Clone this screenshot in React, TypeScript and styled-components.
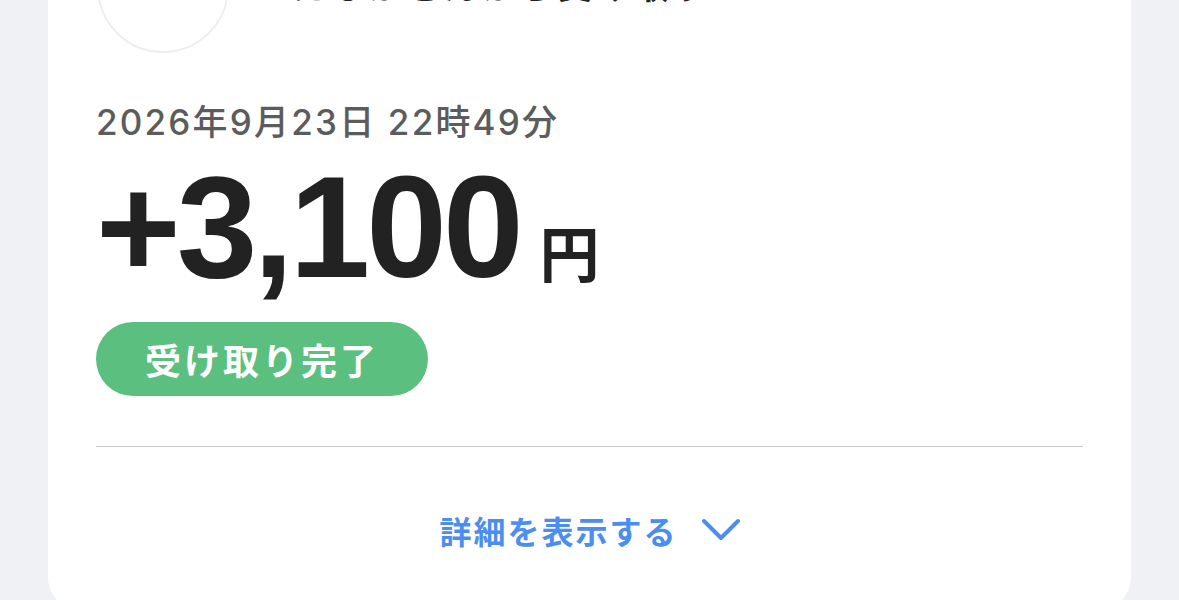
import React from "react";
import styled, { createGlobalStyle } from "styled-components";

const GlobalStyle = createGlobalStyle`
  html, body {
    margin: 0;
    padding: 0;
    background: #eff1f5;
    overflow: hidden;
  }
`;

const JP = `"Liberation Sans", "Noto Sans CJK JP", sans-serif`;

const Page = styled.div`
  height: 600px;
  overflow: hidden;
  padding: 0 48px;
  font-family: ${JP};
`;

const Card = styled.div`
  margin-top: -120px;
  background: #ffffff;
  border-radius: 34px;
  padding: 41px 48px 58px;
  display: flex;
  flex-direction: column;
`;

const Header = styled.div`
  display: flex;
  align-items: flex-start;
  gap: 62px;
`;

const Avatar = styled.div`
  width: 128px;
  height: 128px;
  margin-left: 1px;
  border-radius: 50%;
  border: 2px solid #eeeeee;
  flex-shrink: 0;
`;

const Title = styled.div`
  margin-top: 36px;
  font-size: 36px;
  font-weight: 700;
  color: #222222;
  letter-spacing: 2px;
`;

const DateText = styled.div`
  margin-top: 48px;
  font-family: "Inter", "Noto Sans CJK JP", sans-serif;
  font-size: 35px;
  font-weight: 500;
  color: #5c5c5c;
  letter-spacing: 2.2px;
  line-height: 1.2;
`;

const AmountRow = styled.div`
  display: flex;
  align-items: baseline;
  gap: 20px;
  margin-top: 12px;
  color: #222222;
`;

const Amount = styled.span`
  font-size: 145px;
  font-weight: 700;
  letter-spacing: -4px;
  line-height: 1;
`;

const Yen = styled.span`
  font-size: 60px;
  font-weight: 700;
`;

const Badge = styled.div`
  align-self: flex-start;
  margin-top: 22px;
  height: 74px;
  width: 332px;
  box-sizing: border-box;
  padding-left: 49px;
  display: flex;
  align-items: center;
  border-radius: 37px;
  background: #5bbf7f;
  color: #ffffff;
  font-size: 36px;
  font-weight: 700;
  letter-spacing: 3px;
`;

const Divider = styled.hr`
  margin: 50px 0 0;
  border: none;
  border-top: 1px solid #c9c9c9;
`;

const DetailsButton = styled.button`
  margin-top: 60px;
  align-self: center;
  display: flex;
  align-items: center;
  gap: 24px;
  background: none;
  border: none;
  padding: 0;
  cursor: pointer;
  color: #4b8ef0;
  font-family: ${JP};
  font-size: 32px;
  font-weight: 700;
  letter-spacing: 2px;
`;

const Chevron = () => (
  <svg width="38" height="24" viewBox="0 0 38 24" fill="none">
    <path
      d="M2 3 L19 20 L36 3"
      stroke="#4b8ef0"
      strokeWidth="4"
      strokeLinecap="round"
      strokeLinejoin="round"
    />
  </svg>
);

const App: React.FC = () => {
  return (
    <>
      <GlobalStyle />
      <Page>
        <Card>
          <Header>
            <Avatar />
            <Title>たなかさんから受け取り</Title>
          </Header>
          <DateText>2026年9月23日 22時49分</DateText>
          <AmountRow>
            <Amount>+3,100</Amount>
            <Yen>円</Yen>
          </AmountRow>
          <Badge>受け取り完了</Badge>
          <Divider />
          <DetailsButton>
            詳細を表示する
            <Chevron />
          </DetailsButton>
        </Card>
      </Page>
    </>
  );
};

export default App;
